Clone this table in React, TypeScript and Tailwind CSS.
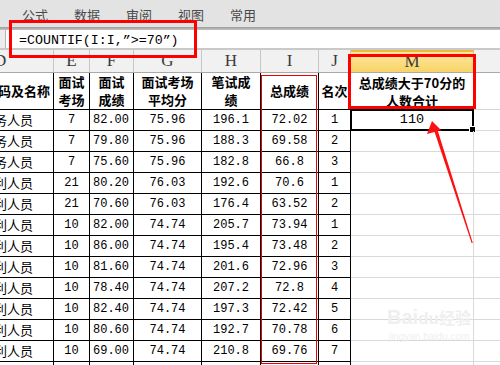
import React from "react";

const cjk = { fontFamily: '"Noto Sans CJK SC", "Noto Sans", sans-serif' };
const mono = { fontFamily: '"Liberation Mono", "DejaVu Sans Mono", monospace' };
const serif = { fontFamily: '"Liberation Serif", serif' };

const WC = ["w-[54px]", "w-[36px]", "w-[44px]", "w-[68px]", "w-[59px]", "w-[58px]", "w-[32px]", "w-[123px]"];

const data: [string, string, string, string, string, string, string][] = [
  ["财务人员", "7", "82.00", "75.96", "196.1", "72.02", "1"],
  ["财务人员", "7", "79.80", "75.96", "188.3", "69.58", "2"],
  ["财务人员", "7", "75.60", "75.96", "182.8", "66.8", "3"],
  ["水利人员", "21", "80.20", "76.03", "192.6", "70.6", "1"],
  ["水利人员", "21", "70.60", "76.03", "176.4", "63.52", "2"],
  ["水利人员", "10", "82.00", "74.74", "205.7", "73.94", "1"],
  ["水利人员", "10", "86.00", "74.74", "195.4", "73.48", "2"],
  ["水利人员", "10", "81.60", "74.74", "201.6", "72.96", "3"],
  ["水利人员", "10", "78.40", "74.74", "207.2", "72.8", "4"],
  ["水利人员", "10", "82.40", "74.74", "197.3", "72.42", "5"],
  ["水利人员", "10", "80.60", "74.74", "192.7", "70.78", "6"],
  ["水利人员", "10", "69.00", "74.74", "210.8", "69.76", "7"],
  ["", "", "", "", "", "", ""],
];

const letters = ["D", "E", "F", "G", "H", "I", "J", "M"];

export default function App() {
  return (
    <div className="relative w-[500px] h-[365px] overflow-hidden bg-white text-black">
      {/* ribbon tabs */}
      <div className="h-[27px] bg-[#e3e3e3] flex items-center pl-[9px] pt-[3px] text-[13px] text-[#4a4a4a]" style={cjk}>
        {["公式", "数据", "审阅", "视图", "常用"].map((t) => (
          <div key={t} className="w-[52px] text-center">{t}</div>
        ))}
      </div>
      <div className="h-[3px] bg-gradient-to-b from-[#9c9c9c] to-[#c4c4c4]" />
      {/* formula bar */}
      <div className="h-[18px] flex bg-white">
        <div className="w-[6px] bg-[#ececec] border-r border-[#b5b5b5]" />
        <div className="flex items-center pl-[13px] text-[13.3px] pt-[4px] whitespace-nowrap" style={mono}>
          =COUNTIF(I:I,”&gt;=70”)
        </div>
      </div>
      <div className="h-[2px] bg-[#c9c9c9]" />
      {/* column letters */}
      <div className="flex h-[23px] bg-[#f1f1f1] border-b border-[#a9a9a9]">
        {letters.map((l, i) => (
          <div
            key={l}
            className={`${WC[i]} shrink-0 box-border border-r border-[#c6c6c6] flex items-center ${i === 0 ? "justify-start" : "justify-center"} text-[17px] text-[#3a3a3a] ${i === 7 ? "bg-gradient-to-b from-[#fde7a0] to-[#f8d464] border-t-[2px] border-t-[#f1b93b]" : ""}`}
            style={serif}
          >
            <span className={i === 0 ? "-ml-[6px]" : ""}>{l}</span>
          </div>
        ))}
        <div className="flex-1" />
      </div>
      {/* header row */}
      <div className="flex h-[37px] text-[13px] font-bold leading-[18px]" style={cjk}>
        <div className={`${WC[0]} shrink-0 box-border border-r border-b border-black flex items-center justify-end pr-[3px] overflow-hidden whitespace-nowrap`}>
          岗位代码及名称
        </div>
        {[["面试", "考场"], ["面试", "成绩"], ["面试考场", "平均分"], ["笔试成", "绩"], ["总成绩"], ["名次"]].map((lines, k) => (
          <div
            key={k}
            className={`${WC[k + 1]} shrink-0 box-border border-r border-b border-black flex flex-col items-center justify-center whitespace-nowrap overflow-hidden`}
          >
            {lines.map((s) => (
              <div key={s}>{s}</div>
            ))}
          </div>
        ))}
        <div className={`${WC[7]} shrink-0 box-border border-r border-b border-[#d6d6d6] flex flex-col items-center justify-center whitespace-nowrap pt-[2px]`}>
          <div>总成绩大于70分的</div>
          <div>人数合计</div>
        </div>
        <div className="flex-1 border-b border-[#d6d6d6]" />
      </div>
      {/* data rows */}
      {data.map((r, ri) => (
        <div key={ri} className="flex h-[21px] text-[12px]">
          <div className={`${WC[0]} shrink-0 box-border border-r border-b border-black flex items-center justify-end pr-[20px] overflow-hidden whitespace-nowrap text-[13px]`} style={cjk}>
            {r[0]}
          </div>
          {r.slice(1).map((v, k) => (
            <div
              key={k}
              className={`${WC[k + 1]} shrink-0 box-border border-r border-b border-black flex items-center ${k === 1 ? "justify-start pl-[3px]" : "justify-center"} whitespace-nowrap`}
              style={mono}
            >
              {v}
            </div>
          ))}
          <div className={`${WC[7]} shrink-0 box-border border-r border-b border-[#d9d9d9] relative flex items-center justify-center`} style={mono}>
            {ri === 0 && (
              <>
                <span className="text-[13.5px]">110</span>
                <div className="absolute -left-[1px] -top-[1px] -right-[1px] -bottom-[1px] border-2 border-black" />
                <div className="absolute -right-[3px] -bottom-[3px] w-[5px] h-[5px] bg-black border border-white box-content" />
              </>
            )}
          </div>
          <div className="flex-1 border-b border-[#d9d9d9]" />
        </div>
      ))}

      {/* watermark */}
      <div className="absolute left-[384px] top-[305px] w-[90px] flex flex-col items-center text-[#efefef] pointer-events-none">
        <div className="text-[20px] font-bold leading-[24px] whitespace-nowrap" style={{ fontFamily: '"Liberation Sans", "Noto Sans CJK SC", sans-serif' }}>
          Bai<span className="text-[17px]">du</span>
          <span className="text-[16px]" style={cjk}>经验</span>
        </div>
        <div className="text-[10px] leading-[12px] whitespace-nowrap" style={{ fontFamily: '"Liberation Sans", sans-serif' }}>
          jingyan.baidu.com
        </div>
      </div>

      {/* red highlight boxes */}
      <div className="absolute left-[9px] top-[20px] w-[188px] h-[38px] border-[3px] border-[#ff0000]" />
      <div className="absolute left-[348px] top-[54px] w-[128px] h-[55px] border-[3px] border-[#ff0000]" />
      <div className="absolute left-[261px] top-[75px] w-[56px] h-[289px] border border-[#ee0000]" />

      {/* arrow */}
      <svg className="absolute left-0 top-0 pointer-events-none" width="500" height="365" viewBox="0 0 500 365">
        <polygon
          points="432,121 441.5,130.5 437.8,130.8 472.8,243 471.6,243 434.6,132 427,134"
          fill="#ff1010"
        />
      </svg>
    </div>
  );
}
